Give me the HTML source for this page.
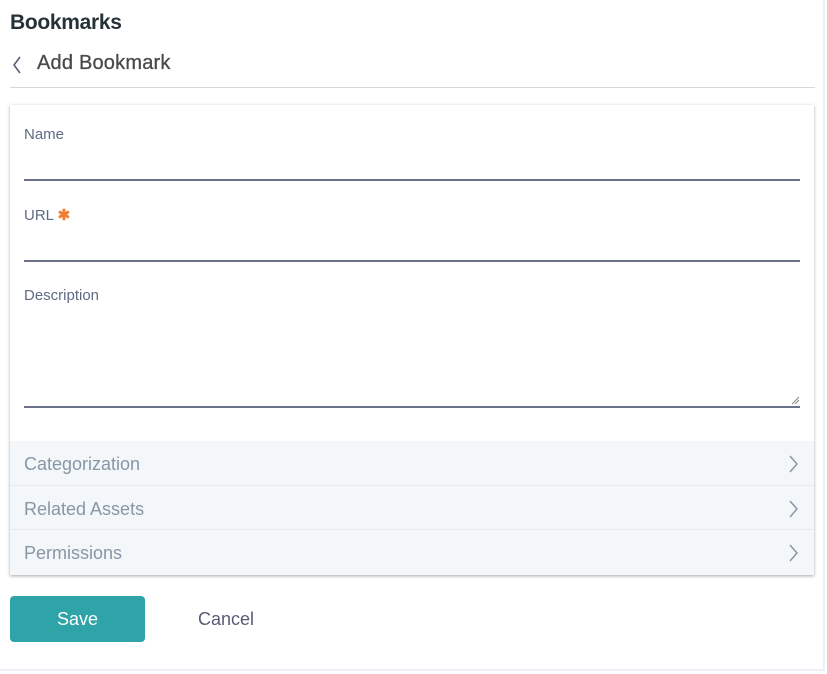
<!DOCTYPE html>
<html><head><style>
body{margin:0;width:827px;height:674px;background:#fff;font-family:"Liberation Sans",sans-serif;position:relative;overflow:hidden}
.frame{position:absolute;left:0;top:0;width:823px;height:669px;border-right:2px solid #edf1f5;border-bottom:2px solid #edf1f5}
h1{position:absolute;left:10px;top:11px;margin:0;font-size:21px;font-weight:bold;color:#263238;letter-spacing:-0.3px}
.sub{position:absolute;left:37px;top:52px;font-size:20px;color:#4a4a4a;letter-spacing:0.2px;-webkit-text-stroke:0.3px #4a4a4a}
.div{position:absolute;left:10px;top:87px;width:805px;height:1px;background:#d5d8dc}
.card{position:absolute;left:10px;top:105px;width:804px;height:470px;background:#fff;box-shadow:0 1px 3px rgba(0,0,0,.35)}
.lbl{position:absolute;left:14px;font-size:15px;color:#5f6a85}
.line{position:absolute;left:14px;width:776px;height:2px;background:#6b7289}
.row{position:absolute;left:0;width:804px;height:44px;background:#f4f7f9;border-top:1px solid #e6eaee;box-sizing:border-box}
.row span{position:absolute;left:14px;top:13px;font-size:18px;color:#8797a6}
.row svg{position:absolute;right:16px;top:14px}
.save{position:absolute;left:10px;top:596px;width:135px;height:46px;background:#2fa4a8;border-radius:4px;color:#fff;font-size:18px;text-align:center;line-height:46px}
.cancel{position:absolute;left:198px;top:609px;font-size:18px;color:#555c75}
</style></head><body>
<div class="frame"></div>
<h1>Bookmarks</h1>
<svg style="position:absolute;left:12px;top:56px" width="10" height="18"><path d="M8 1 L2 9 L8 17" stroke="#555c75" stroke-width="1.6" fill="none"/></svg>
<div class="sub">Add Bookmark</div>
<div class="div"></div>
<div class="card">
<div class="lbl" style="top:21px">Name</div>
<div class="line" style="top:74px"></div>
<div class="lbl" style="top:101px">URL <span style="color:#f07d33;font-weight:bold">✱</span></div>
<div class="line" style="top:155px"></div>
<div class="lbl" style="top:182px">Description</div>
<svg style="position:absolute;left:781px;top:291px" width="9" height="9"><path d="M1 8 L8 1 M4 8 L8 4" stroke="#888" stroke-width="1"/></svg>
<div class="line" style="top:301px"></div>
<div class="row" style="top:336px;border-top:none"><span>Categorization</span><svg width="9" height="18"><path d="M1 1 L8 9 L1 17" stroke="#8797a6" stroke-width="1.5" fill="none"/></svg></div>
<div class="row" style="top:380px"><span>Related Assets</span><svg width="9" height="18"><path d="M1 1 L8 9 L1 17" stroke="#8797a6" stroke-width="1.5" fill="none"/></svg></div>
<div class="row" style="top:424px;height:46px"><span>Permissions</span><svg width="9" height="18"><path d="M1 1 L8 9 L1 17" stroke="#8797a6" stroke-width="1.5" fill="none"/></svg></div>
</div>
<div class="save">Save</div>
<div class="cancel">Cancel</div>
</body></html>
